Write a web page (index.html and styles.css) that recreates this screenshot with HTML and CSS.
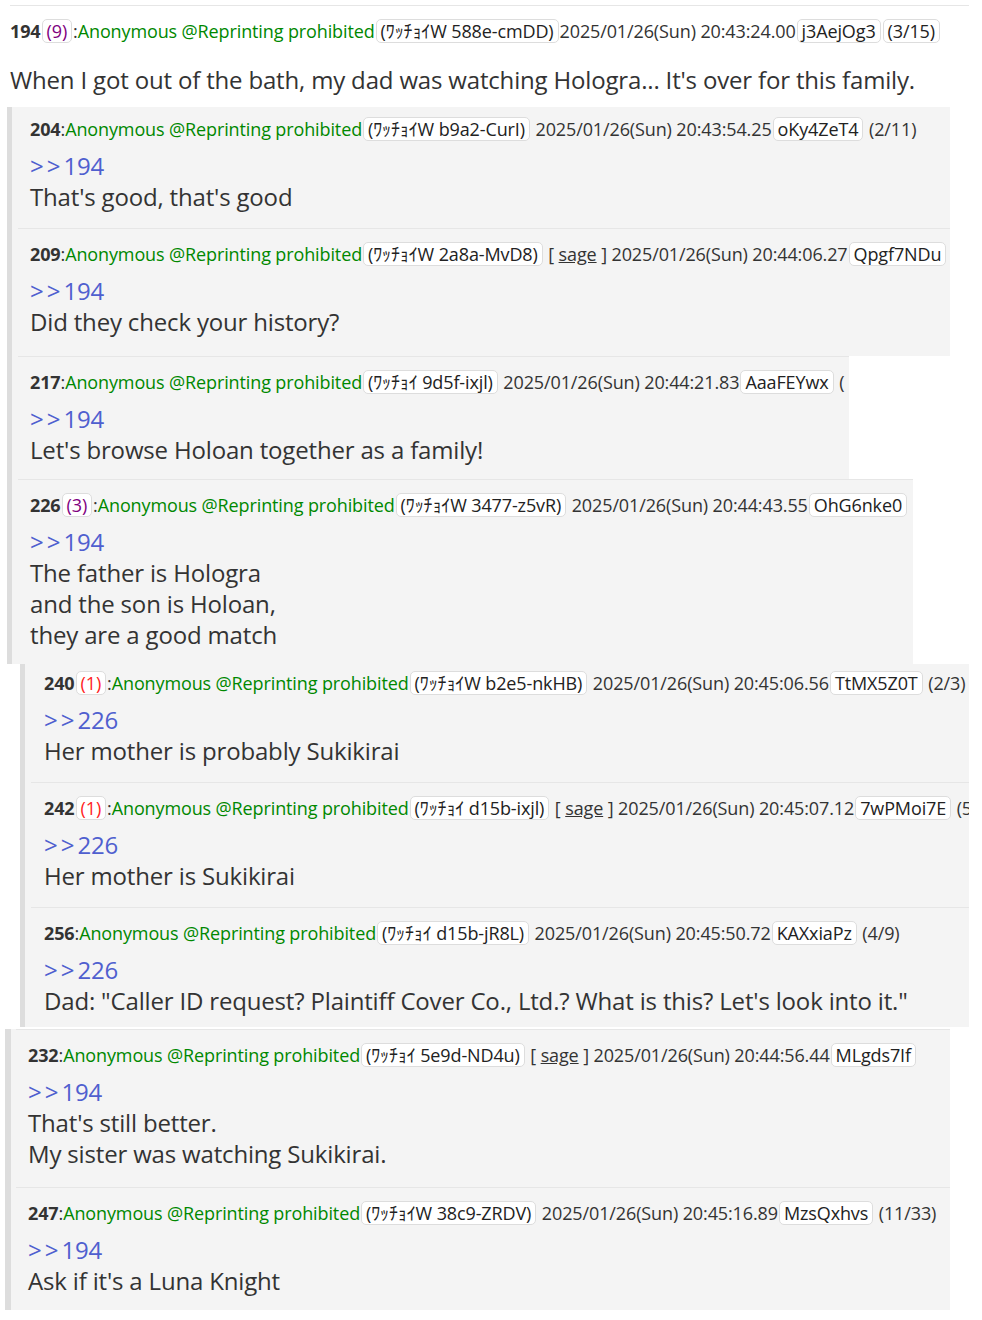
FILE: index.html
```html
<!DOCTYPE html>
<html lang="en">
<head>
<meta charset="utf-8">
<title>Thread</title>
<link rel="stylesheet" href="styles.css">
</head>
<body>
<main class="thread">
    <div class="thread-rule"></div>

    <article class="post-root">
        <div class="post-head"><b>194</b><span class="badge count-purple">(9)</span>:<span class="name">Anonymous @Reprinting prohibited</span><span class="badge">(ﾜｯﾁｮｲW 588e-cmDD)</span>2025/01/26(Sun) 20:43:24.00<span class="badge">j3AejOg3</span><span class="badge">(3/15)</span></div>
        <div class="post-text">When I got out of the bath, my dad was watching Hologra... It's over for this family.</div>
    </article>

    <section class="replies replies-a">
        <article class="post w-938">
            <div class="post-inner pt-8 pb-16">
                <div class="post-head"><b>204</b>:<span class="name">Anonymous @Reprinting prohibited</span><span class="badge">(ﾜｯﾁｮｲW b9a2-CurI)</span> 2025/01/26(Sun) 20:43:54.25<span class="badge">oKy4ZeT4</span> (2/11)</div>
                <div class="post-text"><a class="anchor"><span class="gt">&gt;&gt;</span>194</a><br>That's good, that's good</div>
            </div>
        </article>
        <article class="post w-938">
            <div class="post-inner pb-19">
                <div class="post-head"><b>209</b>:<span class="name">Anonymous @Reprinting prohibited</span><span class="badge">(ﾜｯﾁｮｲW 2a8a-MvD8)</span> [ <u>sage</u> ] 2025/01/26(Sun) 20:44:06.27<span class="badge">Qpgf7NDu</span></div>
                <div class="post-text"><a class="anchor"><span class="gt">&gt;&gt;</span>194</a><br>Did they check your history?</div>
            </div>
        </article>
        <article class="post w-837">
            <div class="post-inner">
                <div class="post-head"><b>217</b>:<span class="name">Anonymous @Reprinting prohibited</span><span class="badge">(ﾜｯﾁｮｲ 9d5f-ixjl)</span> 2025/01/26(Sun) 20:44:21.83<span class="badge">AaaFEYwx</span> (</div>
                <div class="post-text"><a class="anchor"><span class="gt">&gt;&gt;</span>194</a><br>Let's browse Holoan together as a family!</div>
            </div>
        </article>
        <article class="post w-901">
            <div class="post-inner">
                <div class="post-head"><b>226</b><span class="badge count-purple">(3)</span>:<span class="name">Anonymous @Reprinting prohibited</span><span class="badge">(ﾜｯﾁｮｲW 3477-z5vR)</span> 2025/01/26(Sun) 20:44:43.55<span class="badge">OhG6nke0</span></div>
                <div class="post-text"><a class="anchor"><span class="gt">&gt;&gt;</span>194</a><br>The father is Hologra<br>and the son is Holoan,<br>they are a good match</div>
            </div>
        </article>
    </section>

    <section class="replies replies-b">
        <article class="post w-944">
            <div class="post-inner pt-5 pb-16">
                <div class="post-head"><b>240</b><span class="badge count-red">(1)</span>:<span class="name">Anonymous @Reprinting prohibited</span><span class="badge">(ﾜｯﾁｮｲW b2e5-nkHB)</span> 2025/01/26(Sun) 20:45:06.56<span class="badge">TtMX5Z0T</span> (2/3)</div>
                <div class="post-text"><a class="anchor"><span class="gt">&gt;&gt;</span>226</a><br>Her mother is probably Sukikirai</div>
            </div>
        </article>
        <article class="post w-944">
            <div class="post-inner pb-16">
                <div class="post-head"><b>242</b><span class="badge count-red">(1)</span>:<span class="name">Anonymous @Reprinting prohibited</span><span class="badge">(ﾜｯﾁｮｲ d15b-ixjl)</span> [ <u>sage</u> ] 2025/01/26(Sun) 20:45:07.12<span class="badge">7wPMoi7E</span> (5</div>
                <div class="post-text"><a class="anchor"><span class="gt">&gt;&gt;</span>226</a><br>Her mother is Sukikirai</div>
            </div>
        </article>
        <article class="post w-944">
            <div class="post-inner pb-11">
                <div class="post-head"><b>256</b>:<span class="name">Anonymous @Reprinting prohibited</span><span class="badge">(ﾜｯﾁｮｲ d15b-jR8L)</span> 2025/01/26(Sun) 20:45:50.72<span class="badge">KAXxiaPz</span> (4/9)</div>
                <div class="post-text"><a class="anchor"><span class="gt">&gt;&gt;</span>226</a><br>Dad: "Caller ID request? Plaintiff Cover Co., Ltd.? What is this? Let's look into it."</div>
            </div>
        </article>
    </section>

    <section class="replies replies-c">
        <article class="post w-939">
            <div class="post-inner ruled pb-18">
                <div class="post-head"><b>232</b>:<span class="name">Anonymous @Reprinting prohibited</span><span class="badge">(ﾜｯﾁｮｲ 5e9d-ND4u)</span> [ <u>sage</u> ] 2025/01/26(Sun) 20:44:56.44<span class="badge">MLgds7If</span></div>
                <div class="post-text"><a class="anchor"><span class="gt">&gt;&gt;</span>194</a><br>That's still better.<br>My sister was watching Sukikirai.</div>
            </div>
        </article>
        <article class="post w-939">
            <div class="post-inner">
                <div class="post-head"><b>247</b>:<span class="name">Anonymous @Reprinting prohibited</span><span class="badge">(ﾜｯﾁｮｲW 38c9-ZRDV)</span> 2025/01/26(Sun) 20:45:16.89<span class="badge">MzsQxhvs</span> (11/33)</div>
                <div class="post-text"><a class="anchor"><span class="gt">&gt;&gt;</span>194</a><br>Ask if it's a Luna Knight</div>
            </div>
        </article>
    </section>
</main>
</body>
</html>
```

FILE: styles.css
```css
html, body {
    margin: 0;
    background-color: white;
}

body {
    font-family: "Open Sans", "Noto Sans CJK JP", sans-serif;
    color: #333;
}

.thread {
    width: 982px;
}

.thread-rule {
    margin: 5px 13px 0 10px;
    border-top: 1px solid #e6e6e6;
}

.post-head {
    font-size: 18px;
    line-height: 28px;
    letter-spacing: -0.12px;
    white-space: nowrap;
    color: #333;
}

.post-head b {
    font-weight: bold;
    color: #333;
}

.name {
    color: #080;
}

.badge {
    display: inline-block;
    line-height: 22px;
    padding: 0 4px;
    margin: 0 1px;
    background-color: white;
    border: 1px solid #ddd;
    border-radius: 5px;
    color: #222;
}

.count-purple {
    color: #800080;
}

.count-red {
    color: #f22;
}

.post-text {
    font-size: 24px;
    line-height: 31px;
    letter-spacing: -0.17px;
    margin-top: 7px;
    white-space: nowrap;
}

.anchor {
    color: #4f5fcf;
    text-decoration: none;
}

.anchor .gt {
    letter-spacing: 3px;
}

/* first post, sits on white */
.post-root {
    padding: 11px 0 12px 10px;
}

.post-root .post-text {
    margin-top: 19px;
}

/* reply groups */
.replies {
    border-left: 5px solid #ddd;
}

.replies-a {
    margin-left: 7px;
}

.replies-b {
    margin-left: 20px;
}

.replies-c {
    margin-left: 5px;
    margin-top: 2px;
    border-left-width: 6px;
}

.post {
    background-color: #f4f4f4;
    overflow: hidden;
}

.post-inner {
    margin-left: 6px;
    padding: 11px 0 14px 12px;
}

.post + .post .post-inner,
.post-inner.ruled {
    border-top: 1px solid #e6e6e6;
}

.replies-b .post-inner {
    padding-left: 13px;
}

.replies-c .post-inner {
    margin-left: 5px;
}

.w-837 { width: 837px; }
.w-901 { width: 901px; }
.w-938 { width: 938px; }
.w-939 { width: 939px; }
.w-944 { width: 944px; }

.post-inner.pt-5 { padding-top: 5px; }
.post-inner.pt-8 { padding-top: 8px; }
.post-inner.pb-11 { padding-bottom: 11px; }
.post-inner.pb-16 { padding-bottom: 16px; }
.post-inner.pb-18 { padding-bottom: 18px; }
.post-inner.pb-19 { padding-bottom: 19px; }
```
